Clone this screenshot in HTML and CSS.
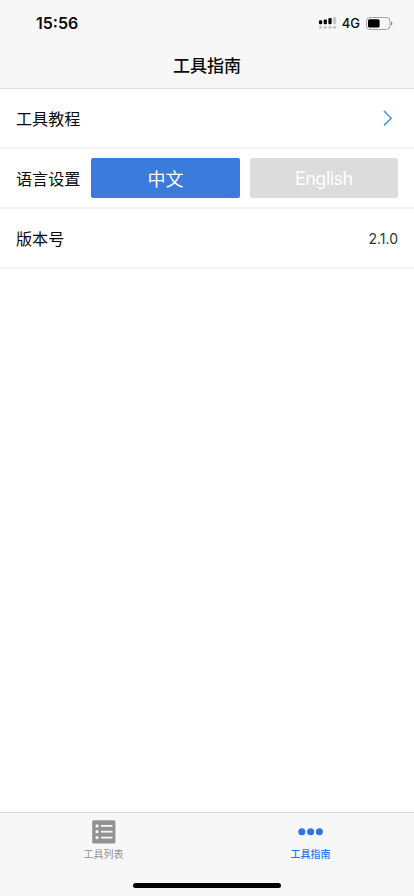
FILE: index.html
```
<!DOCTYPE html>
<html lang="zh-CN">

<head>
	<meta charset="utf-8">
	<title>工具指南</title>
	<meta name="viewport" content="width=device-width, initial-scale=1">
	<link rel="stylesheet" href="styles.css">
</head>

<body>
	<header>
		<div class="status">
			<span class="time">15:56</span>
			<div class="status-icons">
				<svg class="signal" width="18" height="13" viewBox="0 0 18 13">
					<g fill="#000">
						<rect x="0" y="3.2" width="3.2" height="4" rx="1" />
						<rect x="4.7" y="2.4" width="3.2" height="4.8" rx="1" />
						<rect x="9.4" y="0.9" width="3.2" height="6.3" rx="1" />
					</g>
					<g fill="#c9c9c9">
						<rect x="14" y="0" width="3.2" height="7.2" rx="1" />
						<rect x="0" y="9" width="3.2" height="2.8" rx="1" />
						<rect x="4.7" y="9" width="3.2" height="2.8" rx="1" />
						<rect x="9.4" y="9" width="3.2" height="2.8" rx="1" />
						<rect x="14" y="9" width="3.2" height="2.8" rx="1" />
					</g>
				</svg>
				<span class="network">4G</span>
				<svg class="battery" width="27" height="13" viewBox="0 0 27 13">
					<rect x="0.5" y="0.5" width="23.5" height="12" rx="3.5" fill="none" stroke="#a3a3a3" />
					<rect x="2" y="2.2" width="11.6" height="8.4" rx="1.6" fill="#000" />
					<path d="M25 4.5q1.4 .7 1.4 2t-1.4 2z" fill="#8a8a8a" />
				</svg>
			</div>
		</div>
		<h1>工具指南</h1>
	</header>
	<main>
		<div class="row">
			<span class="label">工具教程</span>
			<svg class="arrow" width="10" height="16" viewBox="0 0 10 16">
				<path d="M1 1l7.2 7.2l-7.2 7.2" fill="none" stroke="#4499d8" stroke-width="1.5" />
			</svg>
		</div>
		<div class="row">
			<span class="label">语言设置</span>
			<div class="langs">
				<button class="lang active">中文</button>
				<button class="lang english">English</button>
			</div>
		</div>
		<div class="row">
			<span class="label">版本号</span>
			<span class="version">2.1.0</span>
		</div>
	</main>
	<footer>
		<nav>
			<a class="tab">
				<svg width="24" height="24" viewBox="0 0 24 24">
					<rect x="0.2" y="0.2" width="23.2" height="23.2" rx="1.5" fill="#929292" />
					<g fill="#f7f7f7">
						<circle cx="5" cy="5.9" r="1.6" />
						<circle cx="5" cy="11.7" r="1.6" />
						<circle cx="5" cy="17.6" r="1.6" />
						<rect x="9" y="5" width="11.5" height="1.8" />
						<rect x="9" y="10.8" width="11.5" height="1.8" />
						<rect x="9" y="16.7" width="11.5" height="1.8" />
					</g>
				</svg>
				<span>工具列表</span>
			</a>
			<a class="tab current">
				<svg width="26" height="24" viewBox="0 0 26 24">
					<g fill="#2d73f0">
						<circle cx="3.8" cy="11.7" r="3.5" />
						<circle cx="12.6" cy="11.7" r="3.5" />
						<circle cx="21.4" cy="11.7" r="3.5" />
					</g>
				</svg>
				<span>工具指南</span>
			</a>
		</nav>
		<div class="home-bar"></div>
	</footer>
</body>

</html>
```

FILE: styles.css
```
:root {
	--blue: #3b7bdd;
	--tab-blue: #2d73f0;
	--bar-color: #f7f7f7;
	--bar-border: #dcdcdc;
}

* {
	box-sizing: border-box;
}

html,
body {
	height: 100%;
}

body {
	display: flex;
	flex-direction: column;
	margin: 0;
	background: white;
	color: #0a0a0a;
	font-family: Inter, "Noto Sans CJK SC", sans-serif;
}

header {
	height: 89px;
	background: var(--bar-color);
	border-bottom: 1px solid var(--bar-border);
}

.status {
	display: flex;
	justify-content: space-between;
	align-items: center;
	height: 44px;
	padding: 2px 21px 0 36px;
}

.time {
	font-size: 16px;
	font-weight: 600;
}

.status-icons {
	display: flex;
	align-items: center;
}

.network {
	margin: 0 6px 0 5px;
	font-size: 13px;
	font-weight: 500;
}

h1 {
	margin: 0;
	font-size: 17px;
	font-weight: 500;
	line-height: 45px;
	text-align: center;
}

main {
	flex: 1;
}

.row {
	display: flex;
	justify-content: space-between;
	align-items: center;
	height: 60px;
	padding: 0 16px;
	border-bottom: 2px solid #f3f3f3;
}

.label {
	font-size: 16.1px;
}

.arrow {
	margin-right: 5px;
}

.langs {
	display: flex;
	flex: 1;
	gap: 10px;
	margin-left: 11px;
}

.lang {
	flex: 1;
	height: 40px;
	padding: 0;
	border: 0;
	border-radius: 2px;
	background: #dcdcdc;
	color: white;
	font-family: inherit;
	font-size: 18px;
}

.active {
	background: var(--blue);
}

.english {
	letter-spacing: -0.5px;
}

.version {
	color: #333;
	font-size: 14px;
}

footer {
	height: 84px;
	background: var(--bar-color);
	border-top: 1px solid var(--bar-border);
}

nav {
	display: flex;
	height: 70px;
}

.tab {
	display: flex;
	flex: 1;
	flex-direction: column;
	align-items: center;
	gap: 3px;
	padding-top: 7px;
	color: #929292;
	font-size: 10px;
	line-height: 15px;
}

.current {
	color: var(--tab-blue);
	font-weight: 500;
}

.home-bar {
	width: 148px;
	height: 5px;
	margin: 0 auto;
	border-radius: 3px;
	background: black;
}
```
